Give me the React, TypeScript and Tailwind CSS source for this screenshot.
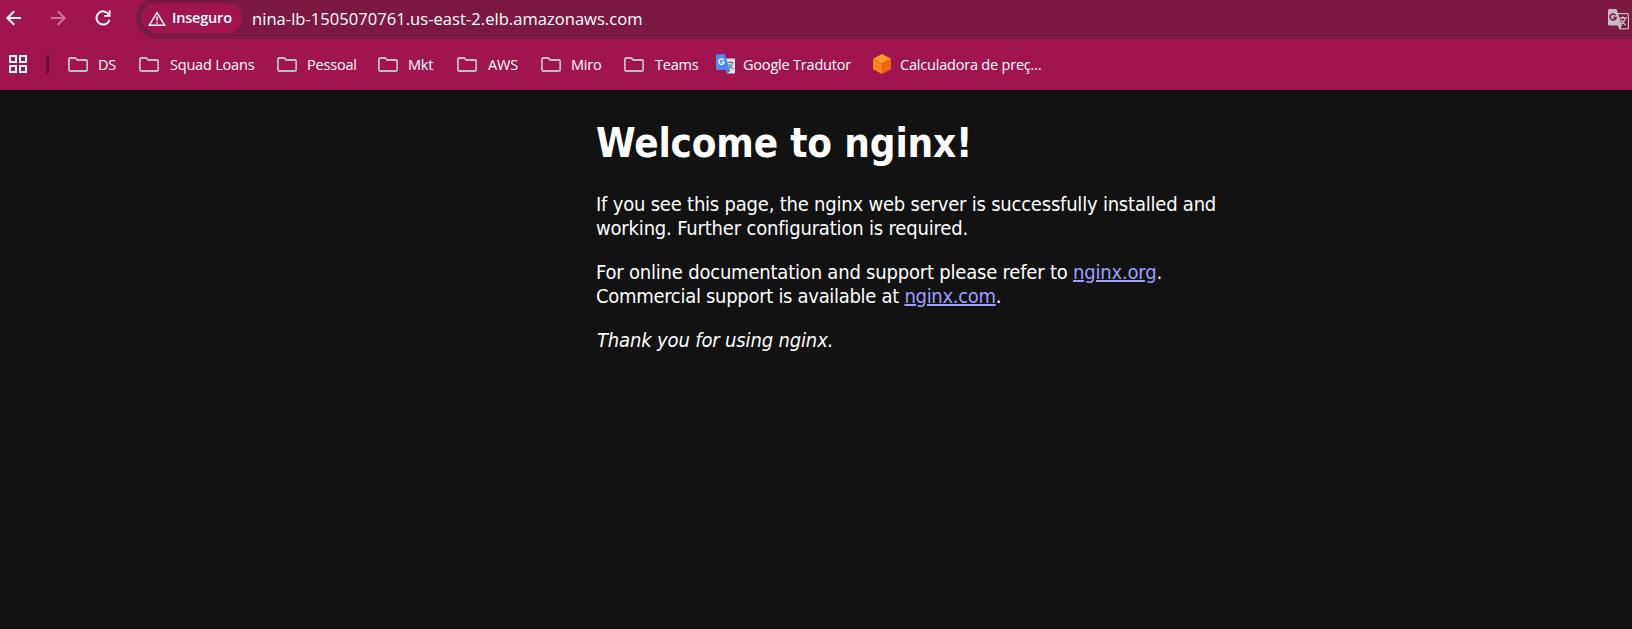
import type { ReactNode } from 'react';

function FolderIcon() {
  return (
    <svg className="h-[15px] w-5 shrink-0" viewBox="0 0 20 15" fill="none">
      <path
        d="M2.2 1H7.3L9.3 3H17.8Q19.2 3 19.2 4.4V12.6Q19.2 14 17.8 14H2.2Q.9 14 .9 12.6V2.3Q.9 1 2.2 1Z"
        stroke="#c5bcc0"
        strokeWidth="1.8"
      />
    </svg>
  );
}

function TranslateIcon() {
  return (
    <svg className="h-5 w-[19px] shrink-0" viewBox="0 0 19 20">
      <path d="M8 4.5H17.8Q19 4.5 19 5.7V18.3Q19 19.5 17.8 19.5H11Z" fill="#dedede" />
      <path d="M11 16H14.5L11.3 19.7Z" fill="#3367d6" />
      <path d="M1.2.3H8.7L13.9 16H1.2Q0 16 0 14.8V1.5Q0 .3 1.2.3Z" fill="#4a8af4" />
      <path d="M11.4 8.5H17.8M14.3 7V8.5M16.6 8.5Q15.6 12 12.8 14.2M12.7 10.3Q14.5 13.2 17.3 15" stroke="#5f7d88" strokeWidth="1.1" fill="none" />
      <path d="M7.6 6.1A2.7 2.7 0 1 0 8.1 8.2H5.5" stroke="#fff" strokeWidth="1.3" fill="none" />
    </svg>
  );
}

function CubeIcon() {
  return (
    <svg className="h-5 w-[18px] shrink-0" viewBox="0 0 18 20">
      <path d="M9 0L18 4.8L9 9.8L0 4.8Z" fill="#ff9d28" />
      <path d="M0 4.8L9 9.8V20L0 15.2Z" fill="#f88718" />
      <path d="M18 4.8L9 9.8V20L18 15.2Z" fill="#ee661b" />
    </svg>
  );
}

function Bookmark({ width, icon, children }: { width: string; icon?: ReactNode; children: ReactNode }) {
  return (
    <div className={`flex shrink-0 items-center whitespace-nowrap ${width}`}>
      {icon ?? <FolderIcon />}
      <span className="pt-0.5">{children}</span>
    </div>
  );
}

export default function App() {
  return (
    <div className="flex h-[629px] w-full flex-col overflow-hidden bg-[#121212] font-['Open_Sans',sans-serif] text-white">
      <header className="h-[90px] shrink-0 bg-[#a0154e]">
        <div className="flex h-[39px]">
          <div className="flex w-[136px] shrink-0 items-center pb-[3px] pl-[6px]">
            <svg className="h-4 w-[15px]" viewBox="0 0 15 16" fill="none" stroke="#fff" strokeWidth="2">
              <path d="M15 8H1.5M8.2 1.2L1.4 8L8.2 14.8" />
            </svg>
            <svg className="ml-[30px] h-4 w-[15px]" viewBox="0 0 15 16" fill="none" stroke="#cd7699" strokeWidth="2">
              <path d="M0 8H13.5M6.8 1.2L13.6 8L6.8 14.8" />
            </svg>
            <svg className="ml-[29px] h-4 w-4" viewBox="0 0 16 16" fill="none">
              <path d="M13.8 4.6A6.6 6.6 0 1 0 14.5 9.7" stroke="#fff" strokeWidth="2" />
              <path d="M15.5.3V6.7H9.1V4.9H13.7V.3Z" fill="#fff" />
            </svg>
          </div>
          <div className="-mt-[3px] flex h-[42px] flex-1 items-center rounded-l-full bg-[#7c1942] pl-[6px]">
            <div className="flex h-[30px] w-[100px] shrink-0 items-center rounded-full bg-[#a0154e] pl-[6px]">
              <svg className="h-[15px] w-[18px]" viewBox="0 0 18 15" fill="none">
                <path d="M9 1.6L16.6 14.2H1.4Z" stroke="#fff" strokeWidth="1.5" />
                <path d="M9 5.6V9.8M9 11V12.5" stroke="#fff" strokeWidth="1.5" />
              </svg>
              <span className="ml-[6px] text-[14.5px] leading-5 font-semibold tracking-[-0.2px]">Inseguro</span>
            </div>
            <span className="ml-[10px] pt-px text-[16.5px] leading-6 tracking-[0.05px]">nina-lb-1505070761.us-east-2.elb.amazonaws.com</span>
            <svg className="mt-[3px] mr-[3px] ml-auto h-[21px] w-[21px]" viewBox="0 0 21 21">
              <path d="M1.5 0H8.5L9.8 4H19.5Q21 4 21 5.5V19Q21 20.5 19.5 20.5H11.2L10 16.5H1.5Q0 16.5 0 15V1.5Q0 0 1.5 0Z" fill="#c9bac1" />
              <path d="M10.2 5.2H19Q19.8 5.2 19.8 6V18.5Q19.8 19.3 19 19.3H12.3L14 16.5Z" fill="#7c1942" />
              <path d="M7.6 6.3A3 3 0 1 0 8.1 8.6H5.2" stroke="#7c1942" strokeWidth="1.6" fill="none" />
              <path d="M11.3 9H18.8M15 7.2V9M17.4 9Q16.4 12.8 12.8 15.5M13 10.8Q14.9 14.2 17.7 16.2" stroke="#c9bac1" strokeWidth="1.4" fill="none" />
            </svg>
          </div>
        </div>
        <nav className="flex h-[51px] items-center pb-px pl-[9px] text-[14.5px] leading-5 tracking-[-0.2px]">
          <svg className="h-[18px] w-[18px] shrink-0" viewBox="0 0 18 18" fill="none" stroke="#fff" strokeWidth="2">
            <path d="M1 1H7V7H1ZM11 1H17V7H11ZM1 11H7V17H1ZM11 11H17V17H11Z" />
          </svg>
          <div className="mr-[19px] ml-[19px] h-[19px] w-[3px] shrink-0 rounded-full bg-[#6b1138]" />
          <Bookmark width="w-[71px] gap-[10px]">DS</Bookmark>
          <Bookmark width="w-[138px] gap-[11px]">Squad Loans</Bookmark>
          <Bookmark width="w-[101px] gap-[10px]">Pessoal</Bookmark>
          <Bookmark width="w-[79px] gap-[10px]">Mkt</Bookmark>
          <Bookmark width="w-[84px] gap-[11px]">AWS</Bookmark>
          <Bookmark width="w-[83px] gap-[10px]">Miro</Bookmark>
          <Bookmark width="w-[92px] gap-[11px]">Teams</Bookmark>
          <Bookmark width="w-[157px] gap-[8px]" icon={<TranslateIcon />}>Google Tradutor</Bookmark>
          <Bookmark width="w-[180px] gap-[9px]" icon={<CubeIcon />}>Calculadora de preç...</Bookmark>
        </nav>
      </header>
      <main className="ml-[596px] w-[640px] pt-[29px] font-['DejaVu_Sans_Condensed','DejaVu_Sans',sans-serif] text-[20px] leading-6 whitespace-nowrap">
        <h1 className="text-[40px] leading-[48px] font-bold tracking-[-0.15px]">Welcome to nginx!</h1>
        <p className="mt-[25px] tracking-[-0.21px]">
          If you see this page, the nginx web server is successfully installed and
          <br />
          <span className="tracking-[-0.18px]">working. Further configuration is required.</span>
        </p>
        <p className="mt-5 tracking-[-0.2px]">
          For online documentation and support please refer to{' '}
          <a className="text-[#9e9eff] underline" href="#org">nginx.org</a>.
          <br />
          <span className="tracking-[-0.3px]">
            Commercial support is available at{' '}
            <a className="text-[#9e9eff] underline" href="#com">nginx.com</a>.
          </span>
        </p>
        <p className="mt-5 ml-px tracking-[-0.15px]">
          <em>Thank you for using nginx.</em>
        </p>
      </main>
    </div>
  );
}
